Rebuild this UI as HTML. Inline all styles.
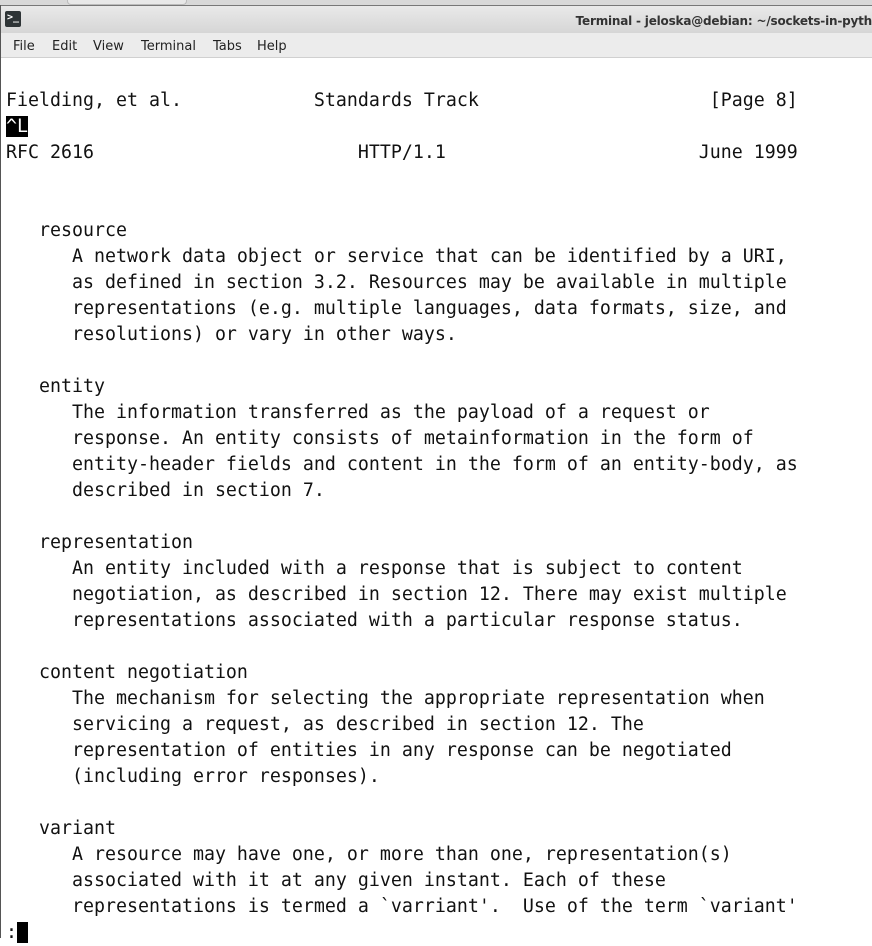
<!DOCTYPE html>
<html><head><style>
html,body{margin:0;padding:0;width:872px;height:938px;overflow:hidden;background:#fff;}
.top{position:absolute;left:0;top:0;width:872px;height:5px;background:#d8d8d8;}
.tab{position:absolute;left:67px;top:0;width:118px;height:4px;background:#e8e8e8;border:1px solid #bbb;border-top:none;border-radius:0 0 4px 4px;}
.title{position:absolute;left:0;top:5px;width:872px;height:28px;background:linear-gradient(#e9e9e9,#d6d6d6);border-top:1px solid #777;box-sizing:border-box;}
.title .t{position:absolute;right:0;top:8px;font:bold 12px "DejaVu Sans","Liberation Sans",sans-serif;color:#333;white-space:nowrap;letter-spacing:-0.2px;}
.icon{position:absolute;left:5px;top:5px;width:16px;height:16px;background:#2e3436;border-radius:2px;color:#fff;font:bold 10px "DejaVu Sans Mono",monospace;line-height:13px;padding-left:2px;box-sizing:border-box;}
.menu{position:absolute;left:0;top:33px;width:872px;height:25px;background:#ececec;border-bottom:1px solid #d0d0d0;box-sizing:border-box;font:13px "DejaVu Sans","Liberation Sans",sans-serif;color:#222;}
.menu span{position:absolute;top:6px;}
.lb{position:absolute;left:0;top:5px;width:1px;height:933px;background:#555;}
pre{position:absolute;left:6px;top:88px;margin:0;font-family:"DejaVu Sans Mono","Liberation Mono",monospace;font-size:18.27px;line-height:26px;color:#111;}
.inv{background:#000;color:#fff;}
</style></head><body>
<div class="top"></div><div class="tab"></div>
<div class="title"><div class="icon">&gt;_</div><div class="t">Terminal - jeloska@debian: ~/sockets-in-pyth</div></div>
<div class="menu"><span style="left:13px">File</span><span style="left:52px">Edit</span><span style="left:93px">View</span><span style="left:141px">Terminal</span><span style="left:213px">Tabs</span><span style="left:257px">Help</span></div>
<div class="lb"></div>
<pre>Fielding, et al.            Standards Track                     [Page 8]
<span class="inv">^L</span>
RFC 2616                        HTTP/1.1                       June 1999


   resource
      A network data object or service that can be identified by a URI,
      as defined in section 3.2. Resources may be available in multiple
      representations (e.g. multiple languages, data formats, size, and
      resolutions) or vary in other ways.

   entity
      The information transferred as the payload of a request or
      response. An entity consists of metainformation in the form of
      entity-header fields and content in the form of an entity-body, as
      described in section 7.

   representation
      An entity included with a response that is subject to content
      negotiation, as described in section 12. There may exist multiple
      representations associated with a particular response status.

   content negotiation
      The mechanism for selecting the appropriate representation when
      servicing a request, as described in section 12. The
      representation of entities in any response can be negotiated
      (including error responses).

   variant
      A resource may have one, or more than one, representation(s)
      associated with it at any given instant. Each of these
      representations is termed a `varriant'.  Use of the term `variant'
:<span class="inv"> </span></pre>
</body></html>
